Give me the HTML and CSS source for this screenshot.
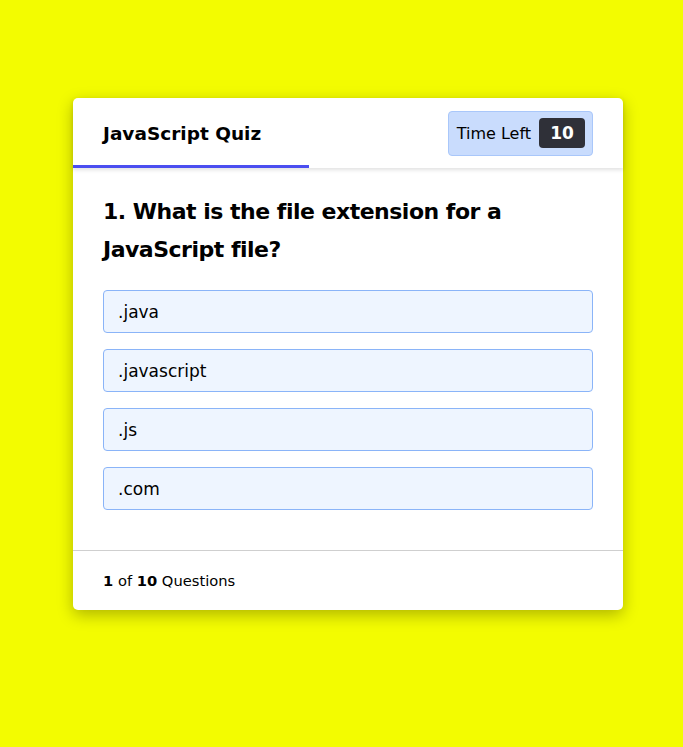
FILE: index.html
```html
<!DOCTYPE html>
<html>
<head>
<meta charset="utf-8">
<link rel="stylesheet" href="styles.css">
</head>
<body>
<div class="card">
  <header class="card-header">
    <div class="title">JavaScript Quiz</div>
    <div class="timer">
      <span class="timer-label">Time Left</span>
      <span class="timer-value">10</span>
    </div>
    <div class="progress-line"></div>
  </header>
  <section class="card-body">
    <h2 class="question">1. What is the file extension for a JavaScript file?</h2>
    <ul class="options">
      <li class="option">.java</li>
      <li class="option">.javascript</li>
      <li class="option">.js</li>
      <li class="option">.com</li>
    </ul>
  </section>
  <footer class="card-footer">
    <p class="count"><b>1</b> of <b>10</b> Questions</p>
  </footer>
</div>
</body>
</html>
```

FILE: styles.css
```css
* { box-sizing: border-box; }
html, body { margin: 0; padding: 0; }
body {
  background: #f3fc00;
  font-family: "DejaVu Sans", "Open Sans", sans-serif;
  color: #000;
  height: 747px;
  padding-top: 98px;
}
.card {
  width: 550px;
  margin-left: 73px;
  background: #fff;
  border-radius: 5px;
  box-shadow: 0 5px 16px rgba(0, 0, 0, 0.28);
}
.card-header {
  position: relative;
  height: 70px;
  padding: 0 30px;
  display: flex;
  align-items: center;
  justify-content: space-between;
  box-shadow: 0 2px 4px rgba(0, 0, 0, 0.12);
}
.title {
  font-size: 18.5px;
  font-weight: 700;
}
.progress-line {
  position: absolute;
  left: 0;
  bottom: 0;
  width: 236px;
  height: 3px;
  background: #4b4ef0;
}
.timer {
  display: flex;
  align-items: center;
  gap: 8px;
  height: 45px;
  padding: 0 7px 0 8px;
  background: #c9dcfd;
  border: 1px solid #a9c7fa;
  border-radius: 4px;
}
.timer-label { font-size: 16px; }
.timer-value {
  display: flex;
  align-items: center;
  justify-content: center;
  width: 46px;
  height: 30px;
  background: #2f3038;
  color: #fff;
  border-radius: 4px;
  font-size: 17px;
  font-weight: 700;
}
.card-body {
  padding: 25px 30px 40px;
}
.question {
  margin: 0 0 21px;
  font-size: 22px;
  letter-spacing: -0.5px;
  line-height: 38px;
  font-weight: 700;
}
.options {
  list-style: none;
  margin: 0;
  padding: 0;
  display: flex;
  flex-direction: column;
  gap: 16px;
}
.option {
  height: 43px;
  display: flex;
  align-items: center;
  padding: 0 14px;
  background: #eef5ff;
  border: 1px solid #8ab4f8;
  border-radius: 4px;
  font-size: 17px;
}
.card-footer {
  border-top: 1px solid #cfcfcf;
  height: 60px;
  padding: 0 30px;
  display: flex;
  align-items: center;
}
.count {
  margin: 0;
  font-size: 14.7px;
}
.count b { font-weight: 600; }
```
